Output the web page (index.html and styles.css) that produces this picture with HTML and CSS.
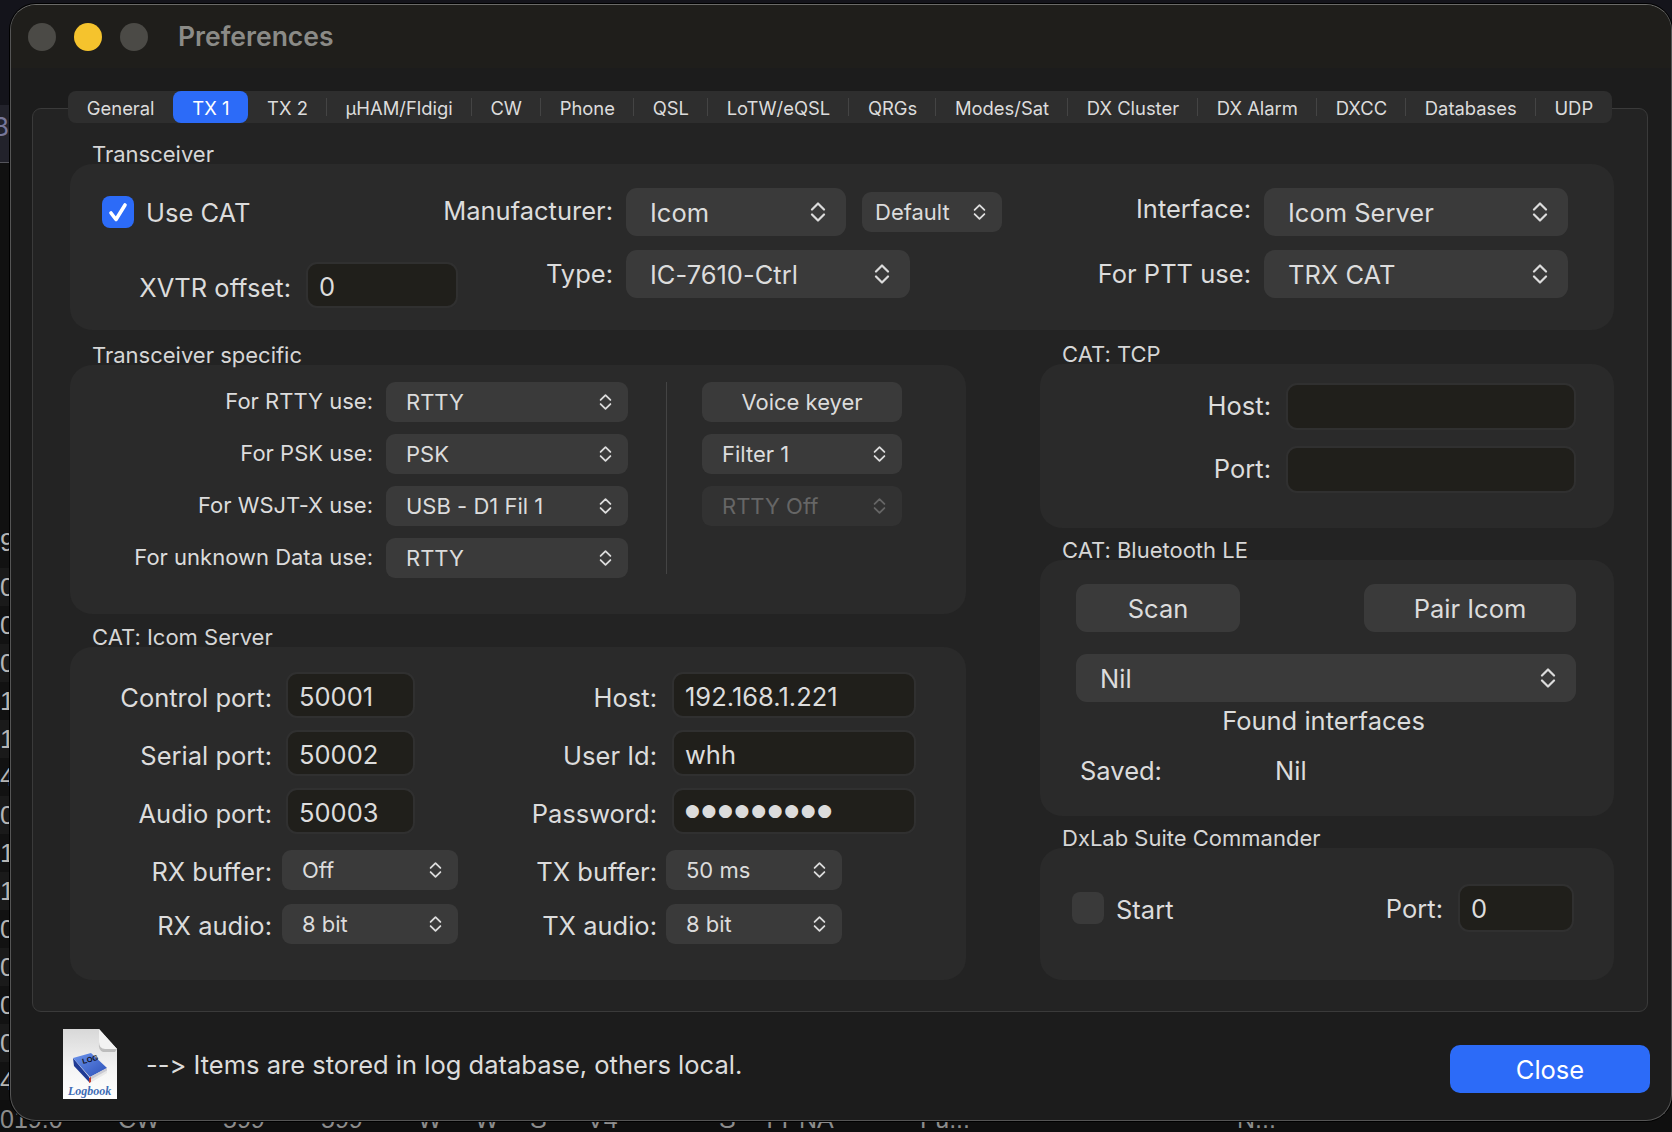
FILE: index.html
```html
<!DOCTYPE html>
<html lang="en">
<head>
    <meta charset="UTF-8">
    <title>Preferences</title>
    <link rel="stylesheet" href="styles.css">
</head>
<body>
    <svg class="defs" width="0" height="0">
        <symbol id="updown" viewBox="0 0 16 20">
            <path d="M2 7.5 L8 1.5 L14 7.5 M2 12.5 L8 18.5 L14 12.5" fill="none" stroke="currentColor" stroke-width="2.2" stroke-linecap="round" stroke-linejoin="round"/>
        </symbol>
    </svg>

    <!-- log window behind the dialog, only its edges show -->
    <div class="log">
        <div class="log-top"></div>
        <div class="log-head">B</div>
        <div class="log-blank"></div>
        <div class="log-row first"><span>9</span></div>
        <div class="log-row alt"><span>0</span></div>
        <div class="log-row"><span>0</span></div>
        <div class="log-row alt"><span>0</span></div>
        <div class="log-row"><span>1</span></div>
        <div class="log-row alt"><span>1</span></div>
        <div class="log-row"><span>4</span></div>
        <div class="log-row alt"><span>0</span></div>
        <div class="log-row"><span>1</span></div>
        <div class="log-row alt"><span>1</span></div>
        <div class="log-row"><span>0</span></div>
        <div class="log-row alt"><span>0</span></div>
        <div class="log-row"><span>0</span></div>
        <div class="log-row alt"><span>0</span></div>
        <div class="log-row"><span>4</span></div>
        <div class="log-row last">
            <span>019.0</span><span>CW</span><span>599</span><span>599</span><span>W</span><span>W</span><span>S</span><span>V4</span><span>S</span><span>TT</span><span>NA</span><span>Fu...</span><span>N...</span>
        </div>
    </div>

    <div class="window">
        <div class="titlebar">
            <span class="light"></span>
            <span class="light yellow"></span>
            <span class="light"></span>
            <span class="window-title">Preferences</span>
        </div>

        <div class="panel">
            <div class="tabs">
                <div class="tab">General</div>
                <div class="tab active">TX 1</div>
                <div class="tab sep">TX 2</div>
                <div class="tab sep">µHAM/Fldigi</div>
                <div class="tab sep">CW</div>
                <div class="tab sep">Phone</div>
                <div class="tab sep">QSL</div>
                <div class="tab sep">LoTW/eQSL</div>
                <div class="tab sep">QRGs</div>
                <div class="tab sep">Modes/Sat</div>
                <div class="tab sep">DX Cluster</div>
                <div class="tab sep">DX Alarm</div>
                <div class="tab sep">DXCC</div>
                <div class="tab sep">Databases</div>
                <div class="tab">UDP</div>
            </div>

            <div class="group">
                <div class="group-title">Transceiver</div>
                <div class="group-box trx-box">
                    <div class="trx-col1">
                        <div class="check-row">
                            <span class="check on">
                                <svg viewBox="0 0 32 32" width="32" height="32"><path d="M9 17 L14 23.5 L23 9" fill="none" stroke="#fff" stroke-width="3.6" stroke-linecap="round" stroke-linejoin="round"/></svg>
                            </span>
                            <span class="big-text">Use CAT</span>
                        </div>
                        <div class="row xvtr-row">
                            <span class="label big-text xvtr-label">XVTR offset:</span>
                            <div class="field xvtr-field">0</div>
                        </div>
                    </div>
                    <div class="trx-col">
                        <div class="row tall-row">
                            <span class="label big-text lift higher maker-label">Manufacturer:</span>
                            <div class="select big maker-select">Icom<svg class="updown"><use href="#updown"/></svg></div>
                            <div class="select default-select">Default<svg class="updown small"><use href="#updown"/></svg></div>
                        </div>
                        <div class="row tall-row">
                            <span class="label big-text lift maker-label">Type:</span>
                            <div class="select big type-select">IC-7610-Ctrl<svg class="updown"><use href="#updown"/></svg></div>
                        </div>
                    </div>
                    <div class="trx-col push">
                        <div class="row tall-row">
                            <span class="label big-text lift highest iface-label">Interface:</span>
                            <div class="select big iface-select">Icom Server<svg class="updown"><use href="#updown"/></svg></div>
                        </div>
                        <div class="row tall-row">
                            <span class="label big-text lift iface-label">For PTT use:</span>
                            <div class="select big iface-select">TRX CAT<svg class="updown"><use href="#updown"/></svg></div>
                        </div>
                    </div>
                </div>
            </div>

            <div class="lower">
                <div class="lower-left">
                    <div class="group">
                        <div class="group-title">Transceiver specific</div>
                        <div class="group-box specific-box">
                            <div class="specific-col">
                                <div class="row"><span class="label small-label">For RTTY use:</span><div class="select specific-select">RTTY<svg class="updown small"><use href="#updown"/></svg></div></div>
                                <div class="row"><span class="label small-label">For PSK use:</span><div class="select specific-select">PSK<svg class="updown small"><use href="#updown"/></svg></div></div>
                                <div class="row"><span class="label small-label">For WSJT-X use:</span><div class="select specific-select">USB - D1 Fil 1<svg class="updown small"><use href="#updown"/></svg></div></div>
                                <div class="row"><span class="label small-label">For unknown Data use:</span><div class="select specific-select">RTTY<svg class="updown small"><use href="#updown"/></svg></div></div>
                            </div>
                            <div class="divider"></div>
                            <div class="specific-col">
                                <div class="button small-button">Voice keyer</div>
                                <div class="select voice-select">Filter 1<svg class="updown small"><use href="#updown"/></svg></div>
                                <div class="select voice-select disabled">RTTY Off<svg class="updown small"><use href="#updown"/></svg></div>
                            </div>
                        </div>
                    </div>

                    <div class="group">
                        <div class="group-title">CAT: Icom Server</div>
                        <div class="group-box icom-box">
                            <div class="icom-col">
                                <div class="row"><span class="label big-text port-label">Control port:</span><div class="field port-field">50001</div></div>
                                <div class="row"><span class="label big-text port-label">Serial port:</span><div class="field port-field">50002</div></div>
                                <div class="row"><span class="label big-text port-label">Audio port:</span><div class="field port-field">50003</div></div>
                                <div class="select-stack">
                                    <div class="row"><span class="label big-text port-label">RX buffer:</span><div class="select buffer-select buffer-left">Off<svg class="updown small"><use href="#updown"/></svg></div></div>
                                    <div class="row"><span class="label big-text port-label">RX audio:</span><div class="select buffer-select buffer-left">8 bit<svg class="updown small"><use href="#updown"/></svg></div></div>
                                </div>
                            </div>
                            <div class="icom-col">
                                <div class="row"><span class="label big-text host-label">Host:</span><div class="field host-field">192.168.1.221</div></div>
                                <div class="row"><span class="label big-text host-label">User Id:</span><div class="field host-field">whh</div></div>
                                <div class="row"><span class="label big-text host-label">Password:</span><div class="field host-field dots">●●●●●●●●●</div></div>
                                <div class="select-stack">
                                    <div class="row"><span class="label big-text host-label">TX buffer:</span><div class="select buffer-select buffer-right">50 ms<svg class="updown small"><use href="#updown"/></svg></div></div>
                                    <div class="row"><span class="label big-text host-label">TX audio:</span><div class="select buffer-select buffer-right">8 bit<svg class="updown small"><use href="#updown"/></svg></div></div>
                                </div>
                            </div>
                        </div>
                    </div>
                </div>

                <div class="lower-right">
                    <div class="group">
                        <div class="group-title">CAT: TCP</div>
                        <div class="group-box tcp-box">
                            <div class="row"><span class="label big-text tcp-label">Host:</span><div class="field tcp-field"></div></div>
                            <div class="row"><span class="label big-text tcp-label">Port:</span><div class="field tcp-field"></div></div>
                        </div>
                    </div>

                    <div class="group">
                        <div class="group-title">CAT: Bluetooth LE</div>
                        <div class="group-box ble-box">
                            <div class="ble-buttons">
                                <div class="button scan-button">Scan</div>
                                <div class="button pair-button">Pair Icom</div>
                            </div>
                            <div class="select big nil-select">Nil<svg class="updown"><use href="#updown"/></svg></div>
                            <div class="found big-text">Found interfaces</div>
                            <div class="saved big-text"><span class="saved-label">Saved:</span><span>Nil</span></div>
                        </div>
                    </div>

                    <div class="group">
                        <div class="group-title">DxLab Suite Commander</div>
                        <div class="group-box dxlab-box">
                            <span class="check"></span>
                            <span class="big-text start-text">Start</span>
                            <div class="row push">
                                <span class="big-text">Port:</span>
                                <div class="field dxlab-field">0</div>
                            </div>
                        </div>
                    </div>
                </div>
            </div>
        </div>

        <div class="footer">
            <svg class="doc-icon" viewBox="0 0 54 70" width="54" height="70">
                <defs>
                    <linearGradient id="page" x1="0" y1="0" x2="0" y2="1">
                        <stop offset="0" stop-color="#d8d8d8"/>
                        <stop offset="0.55" stop-color="#f4f4f4"/>
                        <stop offset="1" stop-color="#ffffff"/>
                    </linearGradient>
                    <linearGradient id="cover" x1="0" y1="0" x2="1" y2="1">
                        <stop offset="0" stop-color="#6b93ec"/>
                        <stop offset="1" stop-color="#2c50b8"/>
                    </linearGradient>
                </defs>
                <path d="M0 0 H36 L54 20 V70 H0 Z" fill="url(#page)"/>
                <path d="M36 0 L54 20 H42 Q36 20 36 13 Z" fill="#f2f2f2"/>
                <path d="M36 13 Q36 20 42 20 H54 L52 23 H40 Q35 21 36 13 Z" fill="#bdbdbd"/>
                <path d="M10 29 L11 37 L27 54 L44 44 L44 39 L27 48 Z" fill="#e8e8e8"/>
                <path d="M10 29 L11 37 L26 53 L26 48 Z" fill="#1f3a94"/>
                <path d="M10 29 L28 24 L44 39 L27 48 Z" fill="url(#cover)"/>
                <path d="M27 48 L44 39 L44 41.5 L27 51 Z" fill="#c9c9d2"/>
                <path d="M26 49 L28 48 L28 53 L26 54 Z" fill="#c0392b"/>
                <text x="0" y="0" transform="translate(20 35) rotate(-15)" class="doc-log">LOG</text>
                <text x="5" y="66" class="doc-name">Logbook</text>
            </svg>
            <span class="footer-text">--&gt; Items are stored in log database, others local.</span>
            <div class="close-button">Close</div>
        </div>
    </div>
</body>
</html>
```

FILE: styles.css
```css
html, body {
    margin: 0;
    height: 100%;
}

body {
    position: relative;
    width: 1672px;
    height: 1132px;
    overflow: hidden;
    background-color: #0f0f0f;
    font-family: Inter, "Noto Sans", sans-serif;
    font-variant-ligatures: none;
    font-feature-settings: "calt" 0;
    color: #dcdcdc;
}

.defs {
    position: absolute;
}

/* log window behind */
.log-top {
    height: 105px;
    background-color: #14141b;
}

.log-head {
    height: 57px;
    line-height: 44px;
    background-color: #22222b;
    border-bottom: 1px solid #55555c;
    font-size: 26px;
    color: #77779a;
    margin-left: -8px;
}

.log-blank {
    height: 367px;
    background-color: #111;
}

.log-row {
    height: 38px;
    line-height: 38px;
    font-family: "Liberation Sans", sans-serif;
    font-size: 26px;
    color: #b5b5b5;
    background-color: #121212;
}

.log-row.first {
    line-height: 24px;
}

.log-row.alt {
    background-color: #1a1a1a;
}

.log-row.last {
    display: grid;
    grid-template-columns: 118px 105px 98px 97px 57px 55px 57px 132px 43px 37px 121px 317px auto;
    font-size: 25px;
    color: #8c8c8c;
    background-color: #0f0f0f;
}

/* dialog */
.window {
    position: absolute;
    left: 10px;
    top: 4px;
    width: 1662px;
    height: 1117px;
    box-sizing: border-box;
    display: flex;
    flex-direction: column;
    background-color: #1c1c1c;
    border: 1px solid #555;
    border-top-color: #6a6a68;
    border-radius: 26px;
    box-shadow: 0 0 0 1px #000;
    overflow: hidden;
}

.titlebar {
    flex: none;
    height: 63px;
    display: flex;
    align-items: center;
    gap: 18px;
    padding-left: 17px;
    background-color: #1f1e1b;
}

.light {
    width: 28px;
    height: 28px;
    border-radius: 50%;
    background-color: #4b4a46;
}

.light.yellow {
    background-color: #f5c32d;
}

.window-title {
    margin: -1px 0 0 12px;
    font-size: 26.5px;
    font-weight: 600;
    color: #8b8b87;
}

.panel {
    flex: none;
    box-sizing: border-box;
    width: 1616px;
    height: 904px;
    margin: 40px 0 0 21px;
    padding: 0 33px 0 37px;
    background-color: #232323;
    border: 1px solid #3a3a3a;
    border-radius: 9px;
}

.tabs {
    display: flex;
    height: 32px;
    margin: -18px 2px 17px -2px;
    background-color: #2e2e2e;
    border-radius: 8px;
    font-size: 18.4px;
}

.tab {
    flex: 1 1 auto;
    position: relative;
    line-height: 34px;
    text-align: center;
    white-space: nowrap;
    color: #dcdcdc;
}

.tab.sep::after {
    content: "";
    position: absolute;
    right: 0;
    top: 7px;
    height: 18px;
    width: 1px;
    background-color: #444;
}

.tab.active {
    background-color: #2c6bf8;
    border-radius: 8px;
    color: #fff;
}

.group-title {
    height: 24px;
    line-height: 29px;
    padding-left: 22px;
    font-size: 22px;
    color: #d6d6d6;
}

.group-box {
    box-sizing: border-box;
    background-color: #2a2a2a;
    border-radius: 22px;
}

.lower {
    display: grid;
    grid-template-columns: 896px 574px;
    column-gap: 74px;
    margin-top: 10px;
}

.lower-left {
    display: flex;
    flex-direction: column;
    gap: 9px;
    padding-top: 1px;
}

.lower-right {
    display: flex;
    flex-direction: column;
    gap: 8px;
}

.row {
    display: flex;
    align-items: center;
}

.label {
    flex: none;
    position: relative;
    top: 2px;
    text-align: right;
    white-space: nowrap;
}

.big-text {
    font-size: 25.5px;
    white-space: nowrap;
}

.label.small-label {
    top: -1px;
    font-size: 22px;
}

.label.lift {
    top: -1px;
}

.label.lift.higher {
    top: -2px;
}

.label.lift.highest {
    top: -4px;
}

.select-stack .label {
    top: 1px;
}

.push {
    margin-left: auto;
}

/* controls */
.select,
.button {
    flex: none;
    box-sizing: border-box;
    display: flex;
    align-items: center;
    height: 40px;
    background-color: #3a3a3a;
    border-radius: 9px;
    font-size: 22px;
    color: #dcdcdc;
    white-space: nowrap;
}

.select {
    justify-content: space-between;
    padding: 0 16px 0 20px;
}

.select.big {
    height: 48px;
    padding: 1px 20px 0 24px;
    font-size: 25.5px;
    border-radius: 11px;
}

.select.disabled {
    background-color: #323232;
    color: #666;
}

.button {
    justify-content: center;
}

.updown {
    flex: none;
    width: 16px;
    height: 20px;
    color: #dcdcdc;
}

.select.big .updown {
    margin-top: -1px;
}

.updown.small {
    width: 13px;
    height: 18px;
}

.disabled .updown {
    color: #666;
}

.field {
    flex: none;
    box-sizing: border-box;
    height: 46px;
    line-height: 45px;
    padding: 0 11px;
    background-color: #201f1b;
    border: 2px solid #303030;
    border-radius: 11px;
    font-size: 25.5px;
    white-space: nowrap;
}

.field.dots {
    line-height: 41px;
    font-family: "DejaVu Sans", sans-serif;
    font-size: 17px;
    letter-spacing: 1.7px;
}

.check {
    flex: none;
    box-sizing: border-box;
    width: 32px;
    height: 32px;
    border-radius: 8px;
    background-color: #3a3a3a;
}

.check.on {
    background-color: #2c6bf8;
}

.check svg {
    display: block;
}

/* Transceiver */
.trx-box {
    display: flex;
    height: 166px;
    padding: 24px 46px 0 32px;
}

.trx-col1 {
    flex: none;
    width: 320px;
}

.check-row {
    display: flex;
    align-items: center;
    gap: 12px;
    margin-top: 8px;
}

.xvtr-row {
    margin-top: 34px;
}

.xvtr-label {
    width: 189px;
}

.xvtr-field {
    width: 152px;
    margin-left: 15px;
}

.trx-col {
    display: flex;
    flex-direction: column;
    gap: 14px;
}

.tall-row {
    height: 48px;
}

.maker-label {
    width: 191px;
    margin-right: 13px;
}

.iface-label {
    width: 160px;
    margin-right: 13px;
}

.maker-select {
    width: 220px;
}

.select.default-select {
    width: 140px;
    margin-left: 16px;
    padding: 0 16px 0 13px;
}

.type-select {
    width: 284px;
}

.iface-select {
    width: 304px;
}

/* Transceiver specific */
.specific-box {
    display: flex;
    height: 249px;
    padding: 17px 0 0 20px;
}

.specific-col {
    display: flex;
    flex-direction: column;
    gap: 12px;
}

.specific-col .label {
    width: 283px;
    margin-right: 13px;
}

.specific-select {
    width: 242px;
}

.divider {
    width: 1px;
    height: 192px;
    margin: 0 35px 0 38px;
    background-color: #444;
}

.small-button,
.voice-select {
    width: 200px;
}

/* Icom server */
.icom-box {
    display: flex;
    height: 333px;
    padding: 25px 0 0 20px;
}

.icom-col {
    display: flex;
    flex-direction: column;
    gap: 12px;
}

.icom-col:first-child {
    width: 390px;
}

.select-stack {
    display: flex;
    flex-direction: column;
    gap: 14px;
    margin-top: 4px;
}

.port-label {
    width: 182px;
}

.host-label {
    width: 177px;
}

.port-field {
    width: 129px;
    margin-left: 14px;
}

.host-field {
    width: 244px;
    margin-left: 15px;
}

.buffer-select {
    width: 176px;
}

.buffer-left {
    margin-left: 10px;
}

.buffer-right {
    margin-left: 9px;
}

/* TCP */
.tcp-box {
    display: flex;
    flex-direction: column;
    gap: 16px;
    height: 164px;
    padding: 19px 0 0 31px;
}

.tcp-box .label {
    top: -1px;
}

.tcp-label {
    width: 200px;
}

.field.tcp-field {
    width: 290px;
    height: 47px;
    margin-left: 15px;
}

/* Bluetooth */
.ble-box {
    height: 256px;
    padding: 24px 38px 0 36px;
}

.ble-buttons {
    display: flex;
    justify-content: space-between;
}

.ble-buttons .button {
    height: 48px;
    font-size: 25.5px;
    border-radius: 11px;
}

.scan-button {
    width: 164px;
}

.pair-button {
    width: 212px;
}

.nil-select {
    margin-top: 22px;
}

.found {
    height: 30px;
    line-height: 30px;
    margin-top: 4px;
    padding-right: 5px;
    text-align: center;
}

.saved {
    display: flex;
    height: 30px;
    line-height: 30px;
    margin-top: 20px;
    padding-left: 4px;
}

.saved-label {
    width: 195px;
}

/* DxLab */
.dxlab-box {
    display: flex;
    align-items: center;
    gap: 12px;
    height: 132px;
    padding: 0 40px 12px 32px;
}

.start-text {
    position: relative;
    top: 1px;
}

.field.dxlab-field {
    width: 116px;
    height: 48px;
    margin-left: 15px;
}

/* footer */
.footer {
    flex: none;
    display: flex;
    align-items: center;
    height: 70px;
    margin-top: 17px;
    padding: 0 21px 0 52px;
}

.doc-icon {
    flex: none;
}

.doc-log {
    font-family: "Liberation Sans", sans-serif;
    font-size: 7.5px;
    font-weight: 700;
    fill: #10131f;
}

.doc-name {
    font-family: "Liberation Serif", serif;
    font-size: 12px;
    font-style: italic;
    font-weight: 700;
    fill: #3f6db5;
}

.footer-text {
    margin-left: 29px;
    font-size: 25.5px;
    color: #dcdcdc;
}

.close-button {
    box-sizing: border-box;
    width: 200px;
    height: 48px;
    line-height: 50px;
    margin: 10px 0 0 auto;
    background-color: #2c6bf8;
    border-radius: 10px;
    text-align: center;
    font-size: 25.5px;
    color: #fff;
}
```
